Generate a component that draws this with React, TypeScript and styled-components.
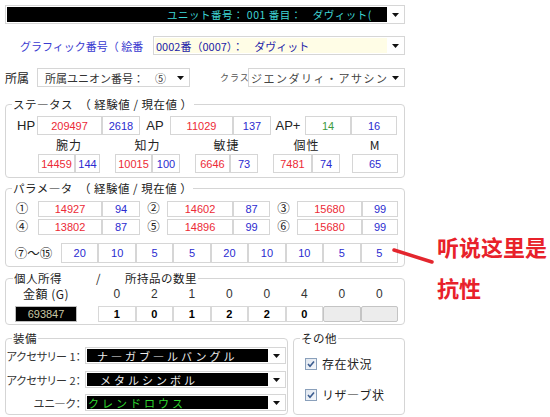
import React from "react";
import styled, { createGlobalStyle } from "styled-components";

const RED = "#ec2a36";
const BLUE = "#2b2bd0";
const GREEN = "#3d9a3d";

const GlobalStyle = createGlobalStyle`
  html, body {
    margin: 0;
    padding: 0;
    background: #fff;
  }
  body {
    font-family: "Noto Sans CJK JP", "Liberation Sans", sans-serif;
    font-size: 12px;
    color: #222;
  }
`;

const Page = styled.div`
  display: flex;
  align-items: flex-start;
  width: 550px;
  height: 417px;
  overflow: hidden;
`;

const Form = styled.div`
  width: 400px;
  padding: 5px 0 0 5px;
  flex-shrink: 0;
  display: flex;
  flex-direction: column;
`;

const Row = styled.div<{ $mt?: number }>`
  display: flex;
  align-items: center;
  margin-top: ${(p) => p.$mt ?? 0}px;
`;

const FieldLabel = styled.span<{ $w: number; $pl?: number; $color?: string; $size?: number; $ml?: number; $ls?: number }>`
  width: ${(p) => p.$w}px;
  padding-left: ${(p) => p.$pl ?? 0}px;
  margin-left: ${(p) => p.$ml ?? 0}px;
  box-sizing: border-box;
  flex-shrink: 0;
  white-space: nowrap;
  color: ${(p) => p.$color ?? "#222"};
  font-size: ${(p) => p.$size ?? 12}px;
  letter-spacing: ${(p) => p.$ls ?? 0}px;
`;

const ComboBox = styled.div<{ $w: number; $h?: number }>`
  width: ${(p) => p.$w}px;
  height: ${(p) => p.$h ?? 19}px;
  box-sizing: border-box;
  border: 1px solid #d6d6d6;
  padding: 1px;
  display: flex;
  background: #fff;
  flex-shrink: 0;
`;

const ComboField = styled.div<{ $bg: string; $color: string; $pl?: number; $ls?: number; $size?: number }>`
  flex: 1;
  min-width: 0;
  display: flex;
  align-items: center;
  background: ${(p) => p.$bg};
  color: ${(p) => p.$color};
  padding-left: ${(p) => p.$pl ?? 2}px;
  letter-spacing: ${(p) => p.$ls ?? 0}px;
  font-size: ${(p) => p.$size ?? 11}px;
  white-space: nowrap;
  overflow: hidden;
`;

const ComboArrow = styled.div`
  width: 16px;
  flex-shrink: 0;
  display: flex;
  align-items: center;
  justify-content: center;
`;

const Arrow = () => (
  <ComboArrow>
    <svg width="7" height="4" viewBox="0 0 7 4">
      <path d="M0 0h7L3.5 4z" fill="#111" />
    </svg>
  </ComboArrow>
);

const Group = styled.fieldset<{ $w?: number; $mt?: number }>`
  margin: ${(p) => p.$mt ?? 0}px 0 0 0;
  padding: 0;
  border: 1px solid #d5d5d5;
  border-radius: 4px;
  min-width: 0;
  width: ${(p) => (p.$w ? `${p.$w}px` : "auto")};
  box-sizing: border-box;
`;

const Legend = styled.legend<{ $ml?: number; $size?: number }>`
  margin-left: ${(p) => p.$ml ?? 6}px;
  padding: 0 1px;
  font-size: ${(p) => p.$size ?? 11.5}px;
  line-height: 14px;
  height: 14px;
  letter-spacing: 0.5px;
  white-space: nowrap;
`;

const GroupBody = styled.div<{ $pt: number; $pb: number; $pl?: number }>`
  display: flex;
  flex-direction: column;
  padding: ${(p) => p.$pt}px 0 ${(p) => p.$pb}px ${(p) => p.$pl ?? 0}px;
`;

const ValueBox = styled.div<{ $w?: number; $h?: number; $color?: string }>`
  width: ${(p) => (p.$w ? `${p.$w}px` : "auto")};
  height: ${(p) => p.$h ?? 19}px;
  box-sizing: border-box;
  border: 1px solid #d6d6d6;
  display: flex;
  align-items: center;
  justify-content: center;
  font-family: "Liberation Sans", "Noto Sans CJK JP", sans-serif;
  font-size: 11px;
  color: ${(p) => p.$color ?? "#000"};
  background: #fff;
  flex-shrink: 0;
`;

const StatLabel = styled.span<{ $w: number; $align?: string }>`
  width: ${(p) => p.$w}px;
  flex-shrink: 0;
  text-align: ${(p) => p.$align ?? "center"};
  font-family: "Liberation Sans", "Noto Sans CJK JP", sans-serif;
  font-size: 13px;
  color: #222;
`;

const StatCols = styled.div`
  display: flex;
  padding-left: 32px;
`;

const StatCol = styled.div<{ $ml?: number }>`
  display: flex;
  flex-direction: column;
  align-items: center;
  margin-left: ${(p) => p.$ml ?? 0}px;
`;

const ColTitle = styled.div`
  height: 19px;
  line-height: 19px;
  font-size: 12px;
  letter-spacing: 1px;
  font-family: "Noto Sans CJK JP", "Liberation Sans", sans-serif;
`;

const Pair = styled.div`
  display: flex;
`;

const CircleLabel = styled.span<{ $w: number }>`
  width: ${(p) => p.$w}px;
  flex-shrink: 0;
  text-align: center;
  font-size: 12.5px;
  align-self: flex-start;
  line-height: 14px;
`;

const ResistStrip = styled.div`
  display: grid;
  grid-template-columns: repeat(9, 1fr);
  width: 337px;
`;

const MoneyLabel = styled.span`
  width: 62px;
  flex-shrink: 0;
  text-align: center;
  font-size: 12px;
  letter-spacing: 0.5px;
  line-height: 18px;
`;

const Counts = styled.div`
  display: grid;
  grid-template-columns: repeat(8, 1fr);
  width: 300px;
  margin-left: 21px;
`;

const Count = styled.span`
  text-align: center;
  font-family: "Liberation Sans", sans-serif;
  font-size: 12px;
  color: #333;
  line-height: 18px;
`;

const MoneyBox = styled.div`
  width: 62px;
  height: 16px;
  box-sizing: border-box;
  border: 1px solid #bdbdbd;
  background: #000;
  color: #c9c7a4;
  font-family: "Liberation Sans", sans-serif;
  font-size: 11px;
  display: flex;
  align-items: center;
  justify-content: center;
  flex-shrink: 0;
`;

const ItemBox = styled.div<{ $empty?: boolean }>`
  height: 16px;
  box-sizing: border-box;
  border: 1px solid ${(p) => (p.$empty ? "#c4c4c4" : "#d8d8d8")};
  background: ${(p) => (p.$empty ? "#ececec" : "#fff")};
  border-radius: ${(p) => (p.$empty ? "2px" : "0")};
  display: flex;
  align-items: center;
  justify-content: center;
  font-family: "Liberation Sans", sans-serif;
  font-weight: bold;
  font-size: 11px;
  color: #000;
`;

const LegendPart = styled.span<{ $ml?: number }>`
  margin-left: ${(p) => p.$ml ?? 0}px;
`;

const BottomRow = styled.div`
  display: flex;
  gap: 5px;
  margin-top: 6px;
  align-items: stretch;
`;

const EquipLabel = styled.span`
  width: 79px;
  flex-shrink: 0;
  text-align: right;
  padding-right: 4px;
  box-sizing: border-box;
  font-size: 11px;
  font-feature-settings: "palt";
  white-space: nowrap;
  color: #333;
`;

const CheckRow = styled.div<{ $mt?: number }>`
  display: flex;
  align-items: center;
  padding-left: 11px;
  margin-top: ${(p) => p.$mt ?? 0}px;
`;

const CheckSquare = styled.span`
  width: 12px;
  height: 12px;
  box-sizing: border-box;
  border: 1px solid #8aa0bb;
  background: linear-gradient(135deg, #dfe6ef, #f6f8fb);
  display: flex;
  align-items: center;
  justify-content: center;
  flex-shrink: 0;
`;

const CheckText = styled.span`
  margin-left: 5px;
  font-size: 12px;
  letter-spacing: 0.5px;
`;

const Annotation = styled.div`
  position: relative;
  margin-left: 32px;
  padding-top: 226px;
  color: #e8212a;
  font-family: "Noto Sans CJK SC", sans-serif;
  font-weight: 700;
  font-size: 22px;
  line-height: 41px;
  white-space: nowrap;
`;

const Pointer = styled.svg`
  position: absolute;
  left: -45px;
  top: 248px;
`;

const Check = ({ label, mt }: { label: string; mt?: number }) => (
  <CheckRow $mt={mt}>
    <CheckSquare>
      <svg width="8" height="8" viewBox="0 0 8 8">
        <path d="M1 4l2 2.2L7 1.5" stroke="#3b5c8f" strokeWidth="1.6" fill="none" />
      </svg>
    </CheckSquare>
    <CheckText>{label}</CheckText>
  </CheckRow>
);

const statCols = [
  { title: "腕力", ml: 0, boxes: [["14459", 37, RED], ["144", 25, BLUE]] },
  { title: "知力", ml: 15, boxes: [["10015", 37, RED], ["100", 28, BLUE]] },
  { title: "敏捷", ml: 15, boxes: [["6646", 35, RED], ["73", 28, BLUE]] },
  { title: "個性", ml: 15, boxes: [["7481", 39, RED], ["74", 28, BLUE]] },
  { title: "M", ml: 12, boxes: [["65", 46, BLUE]] },
] as const;

const resist = [20, 10, 5, 5, 20, 10, 10, 5, 5];
const counts = [0, 2, 1, 0, 0, 4, 0, 0];
const items = ["1", "0", "1", "2", "2", "0", "", ""];

const App: React.FC = () => {
  return (
    <>
      <GlobalStyle />
      <Page>
        <Form>
          <ComboBox $w={400}>
            <ComboField $bg="#000" $color="#3fd6d6" $pl={160} $size={10.5} $ls={0.5}>
              ユニット番号： 001 番目：　ダヴィット(
            </ComboField>
            <Arrow />
          </ComboBox>

          <Row $mt={12}>
            <FieldLabel $w={148} $pl={15} $color="#3a3ad0" $size={11}>
              グラフィック番号（ 絵番
            </FieldLabel>
            <ComboBox $w={252}>
              <ComboField $bg="#fffde6" $color="#2222a8" $pl={1}>
                0002番（0007）：　ダヴィット
              </ComboField>
              <Arrow />
            </ComboBox>
          </Row>

          <Row $mt={13}>
            <FieldLabel $w={32}>所属</FieldLabel>
            <ComboBox $w={153}>
              <ComboField $bg="#fff" $color="#333" $pl={6}>
                所属ユニオン番号：　⑤
              </ComboField>
              <Arrow />
            </ComboBox>
            <FieldLabel $w={28} $ml={30} $color="#555" $size={9} $ls={1}>
              クラス
            </FieldLabel>
            <ComboBox $w={157}>
              <ComboField $bg="#fff" $color="#444" $pl={1} $ls={1.5}>
                ジエンダリィ・アサシン
              </ComboField>
              <Arrow />
            </ComboBox>
          </Row>

          <Group $w={400} $mt={10}>
            <Legend>ステ―タス　（ 経験値 / 現在値 ）</Legend>
            <GroupBody $pt={5} $pb={4}>
              <Row style={{ paddingLeft: 11 }}>
                <StatLabel $w={20} $align="left">HP</StatLabel>
                <ValueBox $w={65} $color={RED}>209497</ValueBox>
                <ValueBox $w={38} $color={BLUE}>2618</ValueBox>
                <StatLabel $w={30}>AP</StatLabel>
                <ValueBox $w={63} $color={RED}>11029</ValueBox>
                <ValueBox $w={38} $color={BLUE}>137</ValueBox>
                <StatLabel $w={34}>AP+</StatLabel>
                <ValueBox $w={46} $color={GREEN}>14</ValueBox>
                <ValueBox $w={46} $color={BLUE}>16</ValueBox>
              </Row>
              <StatCols>
                {statCols.map((c) => (
                  <StatCol key={c.title} $ml={c.ml}>
                    <ColTitle>{c.title}</ColTitle>
                    <Pair>
                      {c.boxes.map(([v, w, col]) => (
                        <ValueBox key={v} $w={w} $color={col}>
                          {v}
                        </ValueBox>
                      ))}
                    </Pair>
                  </StatCol>
                ))}
              </StatCols>
            </GroupBody>
          </Group>

          <Group $w={400} $mt={3}>
            <Legend>パラメ―タ　（ 経験値 / 現在値 ）</Legend>
            <GroupBody $pt={6} $pb={3}>
              <Row>
                <CircleLabel $w={32}>①</CircleLabel>
                <ValueBox $w={64} $h={16} $color={RED}>14927</ValueBox>
                <ValueBox $w={38} $h={16} $color={BLUE}>94</ValueBox>
                <CircleLabel $w={27}>②</CircleLabel>
                <ValueBox $w={66} $h={16} $color={RED}>14602</ValueBox>
                <ValueBox $w={37} $h={16} $color={BLUE}>87</ValueBox>
                <CircleLabel $w={27}>③</CircleLabel>
                <ValueBox $w={65} $h={16} $color={RED}>15680</ValueBox>
                <ValueBox $w={36} $h={16} $color={BLUE}>99</ValueBox>
              </Row>
              <Row $mt={2}>
                <CircleLabel $w={32}>④</CircleLabel>
                <ValueBox $w={64} $h={16} $color={RED}>13802</ValueBox>
                <ValueBox $w={38} $h={16} $color={BLUE}>87</ValueBox>
                <CircleLabel $w={27}>⑤</CircleLabel>
                <ValueBox $w={66} $h={16} $color={RED}>14896</ValueBox>
                <ValueBox $w={37} $h={16} $color={BLUE}>99</ValueBox>
                <CircleLabel $w={27}>⑥</CircleLabel>
                <ValueBox $w={65} $h={16} $color={RED}>15680</ValueBox>
                <ValueBox $w={36} $h={16} $color={BLUE}>99</ValueBox>
              </Row>
              <Row $mt={8}>
                <CircleLabel $w={55} style={{ alignSelf: "center" }}>⑦～⑮</CircleLabel>
                <ResistStrip>
                  {resist.map((r, i) => (
                    <ValueBox key={i} $h={20} $color={BLUE}>
                      {r}
                    </ValueBox>
                  ))}
                </ResistStrip>
              </Row>
            </GroupBody>
          </Group>

          <Group $w={400} $mt={4}>
            <Legend $ml={7} $size={11.5}>
              <LegendPart>個人所得</LegendPart>
              <LegendPart $ml={34}>/</LegendPart>
              <LegendPart $ml={24}>所持品の数里</LegendPart>
            </Legend>
            <GroupBody $pt={0} $pb={2} $pl={9}>
              <Row>
                <MoneyLabel>金額 (G)</MoneyLabel>
                <Counts>
                  {counts.map((c, i) => (
                    <Count key={i}>{c}</Count>
                  ))}
                </Counts>
              </Row>
              <Row $mt={3}>
                <MoneyBox>693847</MoneyBox>
                <Counts>
                  {items.map((it, i) => (
                    <ItemBox key={i} $empty={it === ""}>
                      {it}
                    </ItemBox>
                  ))}
                </Counts>
              </Row>
            </GroupBody>
          </Group>

          <BottomRow>
            <Group $w={283}>
              <Legend>装備</Legend>
              <GroupBody $pt={2} $pb={3}>
                <Row>
                  <EquipLabel>アクセサリー 1：</EquipLabel>
                  <ComboBox $w={201} $h={17}>
                    <ComboField $bg="#000" $color="#eee" $pl={10} $ls={3}>
                      ナ―ガブ―ルバングル
                    </ComboField>
                    <Arrow />
                  </ComboBox>
                </Row>
                <Row $mt={7}>
                  <EquipLabel>アクセサリー 2：</EquipLabel>
                  <ComboBox $w={201} $h={17}>
                    <ComboField $bg="#000" $color="#eee" $pl={13} $ls={3}>
                      メタルシンボル
                    </ComboField>
                    <Arrow />
                  </ComboBox>
                </Row>
                <Row $mt={6}>
                  <EquipLabel>ユニ―ク：</EquipLabel>
                  <ComboBox $w={201} $h={17}>
                    <ComboField $bg="#000" $color="#2fd62f" $pl={1} $ls={3}>
                      クレンドロウス
                    </ComboField>
                    <Arrow />
                  </ComboBox>
                </Row>
              </GroupBody>
            </Group>
            <Group $w={112}>
              <Legend>その他</Legend>
              <GroupBody $pt={10} $pb={3}>
                <Check label="存在状況" />
                <Check label="リザ―ブ状" mt={14} />
              </GroupBody>
            </Group>
          </BottomRow>
        </Form>

        <Annotation>
          <Pointer width="42" height="16" viewBox="0 0 42 16">
            <line x1="2" y1="2" x2="40" y2="14" stroke="#e3262e" strokeWidth="3.5" strokeLinecap="round" />
          </Pointer>
          <div>听说这里是</div>
          <div>抗性</div>
        </Annotation>
      </Page>
    </>
  );
};

export default App;
